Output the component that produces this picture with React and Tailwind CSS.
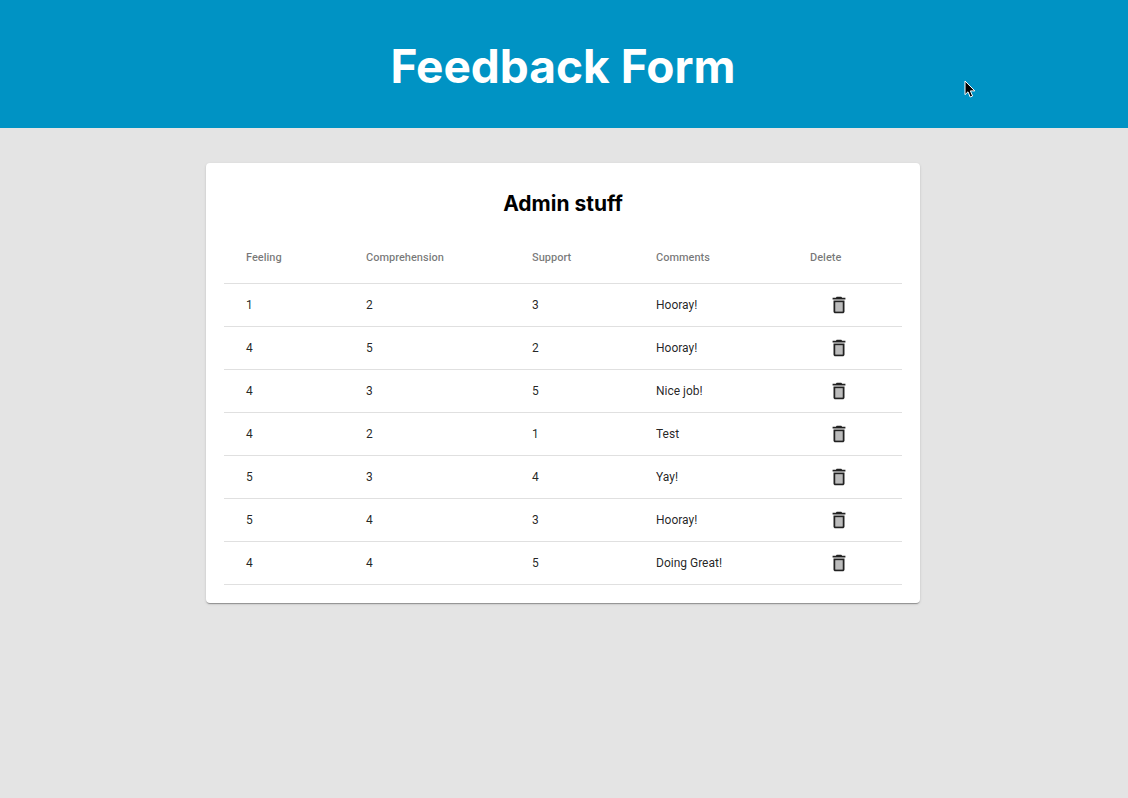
const rows = [
  { feeling: 1, comprehension: 2, support: 3, comments: 'Hooray!' },
  { feeling: 4, comprehension: 5, support: 2, comments: 'Hooray!' },
  { feeling: 4, comprehension: 3, support: 5, comments: 'Nice job!' },
  { feeling: 4, comprehension: 2, support: 1, comments: 'Test' },
  { feeling: 5, comprehension: 3, support: 4, comments: 'Yay!' },
  { feeling: 5, comprehension: 4, support: 3, comments: 'Hooray!' },
  { feeling: 4, comprehension: 4, support: 5, comments: 'Doing Great!' },
];

const columns = [
  { label: 'Feeling', width: 'w-[120px]' },
  { label: 'Comprehension', width: 'w-[166px]' },
  { label: 'Support', width: 'w-[124px]' },
  { label: 'Comments', width: 'w-[154px]' },
  { label: 'Delete', width: 'w-[114px]' },
];

function TrashIcon() {
  return (
    <svg viewBox="0 0 24 24" className="size-[22px]" fill="currentColor" aria-hidden="true">
      <path d="M8 9h8v10H8z" opacity=".3" />
      <path d="M15.5 4l-1-1h-5l-1 1H5v2h14V4h-3.5zM6 19c0 1.1.9 2 2 2h8c1.1 0 2-.9 2-2V7H6v12zM8 9h8v10H8V9z" />
    </svg>
  );
}

function Pointer() {
  return (
    <svg viewBox="0 0 12 19" className="absolute left-[964px] top-20 h-[19px] w-3" aria-hidden="true">
      <path
        d="M1 1v13.7l3-2.9 2.2 5.2 2.4-1-2.2-5.1h4.4z"
        fill="#000"
        stroke="#fff"
        strokeWidth="1"
        strokeLinejoin="round"
      />
    </svg>
  );
}

export default function App() {
  return (
    <div className="min-h-screen bg-[#e4e4e4] font-['Roboto',sans-serif]">
      <header className="relative flex h-32 items-center justify-center bg-[#0093c4] pt-1 pr-0.5">
        <h1 className="font-['Inter',sans-serif] text-[46px] leading-12 font-bold text-white">Feedback Form</h1>
        <Pointer />
      </header>
      <main className="pt-[35px] pr-0.5">
        <section className="mx-auto max-w-[714px] rounded bg-white p-[18px] shadow-[0_2px_1px_-1px_rgba(0,0,0,0.2),0_1px_1px_0_rgba(0,0,0,0.14),0_1px_3px_0_rgba(0,0,0,0.12)]">
          <h2 className="pt-[9px] pb-[13px] text-center font-['Inter',sans-serif] text-[21px] leading-7 font-bold text-black">
            Admin stuff
          </h2>
          <table className="w-full table-fixed border-collapse text-left text-xs text-black/87">
            <thead>
              <tr className="h-[52px] border-b border-[#e0e0e0] text-[11px] text-black/54">
                {columns.map((column) => (
                  <th key={column.label} scope="col" className={`${column.width} px-[22px] pt-1 font-medium`}>
                    {column.label}
                  </th>
                ))}
              </tr>
            </thead>
            <tbody>
              {rows.map((row, index) => (
                <tr key={index} className="h-[43px] border-b border-[#e0e0e0]">
                  <td className="px-[22px]">{row.feeling}</td>
                  <td className="px-[22px]">{row.comprehension}</td>
                  <td className="px-[22px]">{row.support}</td>
                  <td className="px-[22px]">{row.comments}</td>
                  <td className="px-[22px]">
                    <button type="button" aria-label="Delete feedback" className="flex w-[57px] cursor-pointer justify-center">
                      <TrashIcon />
                    </button>
                  </td>
                </tr>
              ))}
            </tbody>
          </table>
        </section>
      </main>
    </div>
  );
}
